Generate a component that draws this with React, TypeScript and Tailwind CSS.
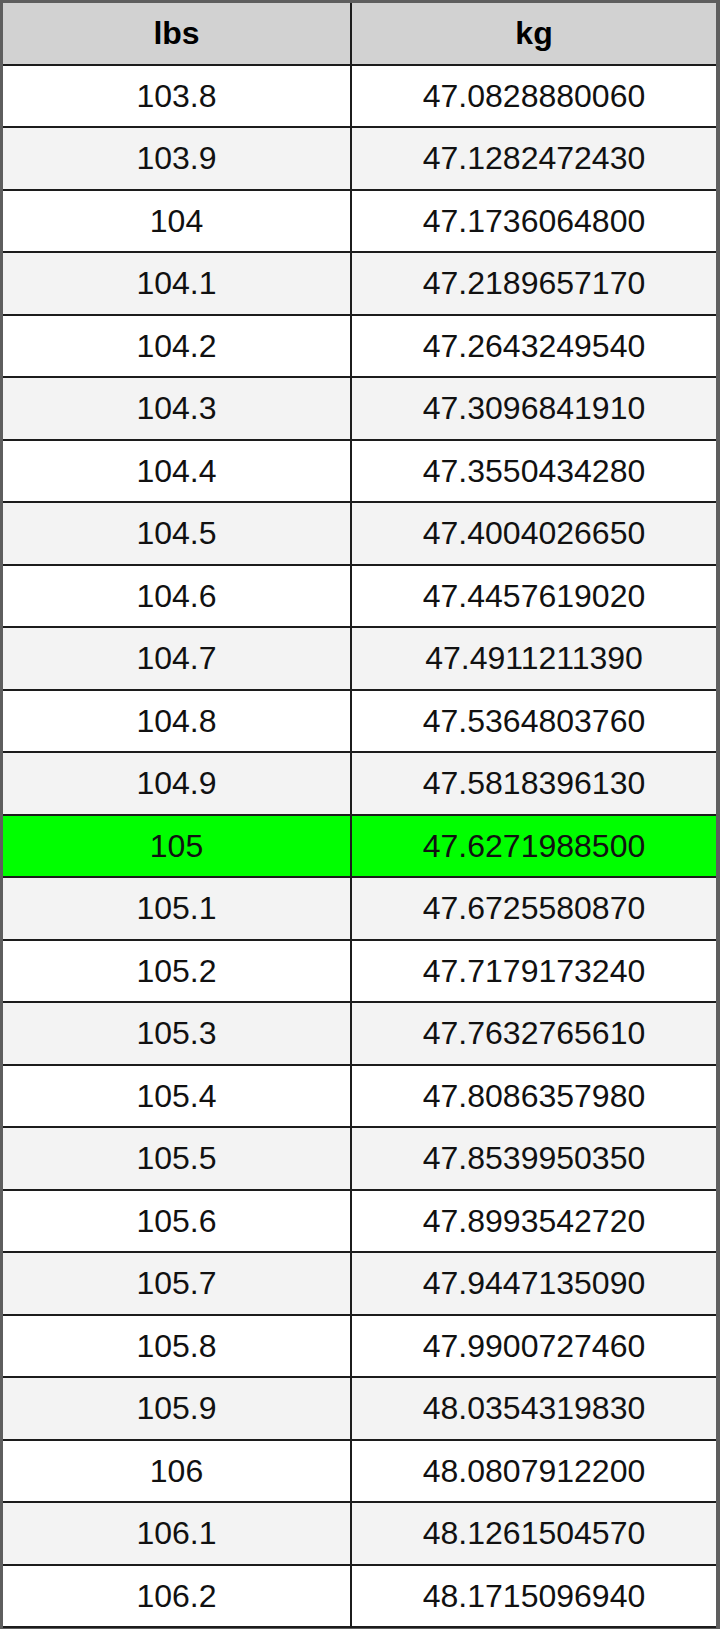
const rows: [string, string][] = [
  ['103.8', '47.0828880060'],
  ['103.9', '47.1282472430'],
  ['104', '47.1736064800'],
  ['104.1', '47.2189657170'],
  ['104.2', '47.2643249540'],
  ['104.3', '47.3096841910'],
  ['104.4', '47.3550434280'],
  ['104.5', '47.4004026650'],
  ['104.6', '47.4457619020'],
  ['104.7', '47.4911211390'],
  ['104.8', '47.5364803760'],
  ['104.9', '47.5818396130'],
  ['105', '47.6271988500'],
  ['105.1', '47.6725580870'],
  ['105.2', '47.7179173240'],
  ['105.3', '47.7632765610'],
  ['105.4', '47.8086357980'],
  ['105.5', '47.8539950350'],
  ['105.6', '47.8993542720'],
  ['105.7', '47.9447135090'],
  ['105.8', '47.9900727460'],
  ['105.9', '48.0354319830'],
  ['106', '48.0807912200'],
  ['106.1', '48.1261504570'],
  ['106.2', '48.1715096940'],
];

export default function App() {
  return (
    <div className="w-[720px] min-h-[1636px] bg-white" style={{ fontFamily: '"Liberation Sans", Arial, sans-serif' }}>
      <div className="w-[720px] border-t-[3px] border-l-[3px] border-r-[4px] border-b border-[#5e5e5e]">
        <div className="grid grid-cols-[347px_2px_1fr] h-[62.5px] border-b-2 border-[#1c1c1c] bg-[#d2d2d2] text-[32px] font-bold text-black">
          <div className="flex items-center justify-center">lbs</div>
          <div className="bg-[#1c1c1c]" />
          <div className="flex items-center justify-center">kg</div>
        </div>
        {rows.map(([lbs, kg], i) => {
          const hl = lbs === '105';
          const bg = hl ? 'bg-[#00ff00]' : i % 2 === 0 ? 'bg-white' : 'bg-[#f3f3f3]';
          return (
            <div key={lbs} className={`grid grid-cols-[347px_2px_1fr] h-[62.5px] border-b-2 border-[#1c1c1c] text-[32px] text-[#111] ${bg}`}>
              <div className="flex items-center justify-center">{lbs}</div>
              <div className="bg-[#1c1c1c]" />
              <div className="flex items-center justify-center">{kg}</div>
            </div>
          );
        })}
      </div>
    </div>
  );
}
